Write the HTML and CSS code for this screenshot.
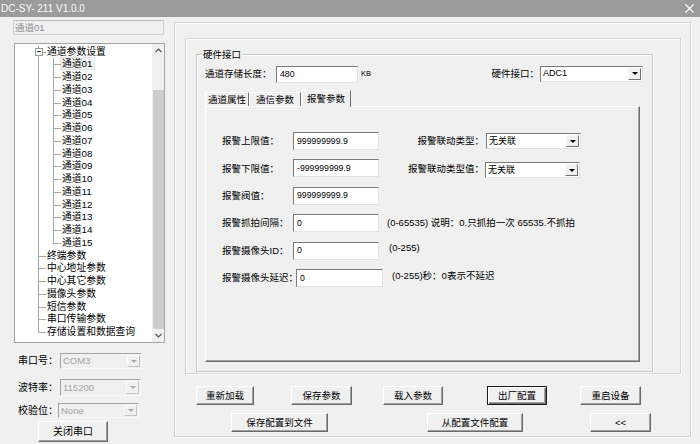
FILE: index.html
```html
<!DOCTYPE html>
<html lang="zh-CN">
<head>
<meta charset="utf-8">
<title>DC-SY- 211 V1.0.0</title>
<link rel="stylesheet" href="styles.css">
</head>
<body>
<div class="window">
  <div class="titlebar">
    <span class="title">DC-SY- 211 V1.0.0</span>
    <svg class="close" width="9" height="9" viewBox="0 0 9 9"><path d="M0.5 0.5 L8.5 8.5 M8.5 0.5 L0.5 8.5" stroke="#fff" stroke-width="1.1" fill="none"/></svg>
  </div>
  <div class="content">
    <div class="left">
      <div class="chan">通道01</div>
      <div class="tree">
        <div class="tree-body">
          <ul class="l1">
            <li class="open"><span class="box"></span><span class="t">通道参数设置</span>
              <ul class="l2">
                <li><span class="t"><span class="sel">通道01</span></span></li>
                <li><span class="t">通道02</span></li>
                <li><span class="t">通道03</span></li>
                <li><span class="t">通道04</span></li>
                <li><span class="t">通道05</span></li>
                <li><span class="t">通道06</span></li>
                <li><span class="t">通道07</span></li>
                <li><span class="t">通道08</span></li>
                <li><span class="t">通道09</span></li>
                <li><span class="t">通道10</span></li>
                <li><span class="t">通道11</span></li>
                <li><span class="t">通道12</span></li>
                <li><span class="t">通道13</span></li>
                <li><span class="t">通道14</span></li>
                <li><span class="t">通道15</span></li>
              </ul>
            </li>
            <li><span class="t">终端参数</span></li>
            <li><span class="t">中心地址参数</span></li>
            <li><span class="t">中心其它参数</span></li>
            <li><span class="t">摄像头参数</span></li>
            <li><span class="t">短信参数</span></li>
            <li><span class="t">串口传输参数</span></li>
            <li><span class="t">存储设置和数据查询</span></li>
          </ul>
        </div>
        <div class="vscroll">
          <div class="sb-btn"><svg width="7" height="5" viewBox="0 0 7 5"><path d="M0.5 4 L3.5 1 L6.5 4" stroke="#555" stroke-width="1.2" fill="none"/></svg></div>
          <div class="sb-track"><div class="sb-thumb"></div></div>
          <div class="sb-btn"><svg width="7" height="5" viewBox="0 0 7 5"><path d="M0.5 1 L3.5 4 L6.5 1" stroke="#555" stroke-width="1.2" fill="none"/></svg></div>
        </div>
      </div>
      <div class="serial">
        <div class="srow s1"><span class="slabel">串口号：</span><div class="combo disabled w82"><span class="val">COM3</span><span class="dd"></span></div></div>
        <div class="srow s2"><span class="slabel">波特率：</span><div class="combo disabled w81"><span class="val">115200</span><span class="dd"></span></div></div>
        <div class="srow s3"><span class="slabel">校验位：</span><div class="combo disabled w81"><span class="val">None</span><span class="dd"></span></div></div>
        <button class="btn close-port">关闭串口</button>
      </div>
    </div>

    <div class="frame-outer">
      <div class="frame-inner">
        <div class="group">
          <span class="legend">硬件接口</span>
          <div class="hw-row">
            <span class="hw-label">通道存储长度：</span>
            <div class="edit hw-len">480</div>
            <span class="kb">KB</span>
            <span class="hw-label2">硬件接口：</span>
            <div class="combo hw-sel"><span class="val">ADC1</span><span class="dd"></span></div>
          </div>
          <div class="tabs">
            <div class="tab t1">通道属性</div>
            <div class="tab t2">通信参数</div>
            <div class="tab t3 active">报警参数</div>
          </div>
          <div class="tabpanel">
            <div class="frow">
              <span class="flabel">报警上限值：</span>
              <div class="edit fin">999999999.9</div>
              <span class="rlabel">报警联动类型：</span>
              <div class="combo rsel"><span class="val">无关联</span><span class="dd"></span></div>
            </div>
            <div class="frow">
              <span class="flabel">报警下限值：</span>
              <div class="edit fin">-999999999.9</div>
              <span class="rlabel">报警联动类型值：</span>
              <div class="combo rsel rsel2"><span class="val">无关联</span><span class="dd"></span></div>
            </div>
            <div class="frow">
              <span class="flabel">报警阀值：</span>
              <div class="edit fin">999999999.9</div>
            </div>
            <div class="frow">
              <span class="flabel">报警抓拍间隔：</span>
              <div class="edit fin">0</div>
              <span class="note n4">(0-65535) 说明：0.只抓拍一次 65535.不抓拍</span>
            </div>
            <div class="frow">
              <span class="flabel">报警摄像头ID：</span>
              <div class="edit fin">0</div>
              <span class="note n5">(0-255)</span>
            </div>
            <div class="frow r6">
              <span class="flabel">报警摄像头延迟：</span>
              <div class="edit fin">0</div>
              <span class="note n6">(0-255)秒：0表示不延迟</span>
            </div>
          </div>
        </div>
      </div>
      <div class="btnrow row1">
        <button class="btn b1">重新加载</button>
        <button class="btn b2">保存参数</button>
        <button class="btn b3">载入参数</button>
        <button class="btn b4 default">出厂配置</button>
        <button class="btn b5">重启设备</button>
      </div>
      <div class="btnrow row2">
        <button class="btn c1">保存配置到文件</button>
        <button class="btn c2">从配置文件配置</button>
        <button class="btn c3">&lt;&lt;</button>
      </div>
    </div>
  </div>
</div>
</body>
</html>
```

FILE: styles.css
```css
* { box-sizing: border-box; }

html, body {
  margin: 0;
  padding: 0;
}

body {
  width: 700px;
  height: 444px;
  overflow: hidden;
  background: #f0f0f0;
  font-family: "Liberation Sans", "Noto Sans CJK SC", sans-serif;
  font-size: 9.5px;
  color: #000;
  line-height: 1;
}

.window {
  display: flex;
  flex-direction: column;
  width: 700px;
  height: 444px;
}

/* buttons (base) */
.btn {
  height: 19px;
  padding: 0;
  margin: 0;
  font: inherit;
  color: #000;
  background: #f0f0f0;
  border: 1px solid;
  border-color: #fff #6a6a6a #6a6a6a #fff;
  box-shadow: inset -1px -1px 0 #a0a0a0;
  white-space: nowrap;
  line-height: 1;
}

.btn.default {
  border-color: #1a1a1a;
  box-shadow: inset 1px 1px 0 #fff, inset -1px -1px 0 #6a6a6a, inset -2px -2px 0 #a0a0a0;
}

/* title bar */
.titlebar {
  height: 17px;
  flex: none;
  background: #9b9b9b;
  display: flex;
  align-items: center;
  justify-content: space-between;
  padding: 0 6px 0 1px;
  color: #fbfbfb;
}

.title {
  font-family: "Liberation Sans", sans-serif;
  font-size: 10px;
}

.close { display: block; margin-top: -1px; }

.content {
  display: flex;
  height: 427px;
}

/* left column */
.left {
  width: 174px;
  flex: none;
  padding: 3px 0 0 13px;
}

.chan {
  width: 151px;
  height: 15px;
  border: 1px solid #cfcfcf;
  border-top-color: #bdbdbd;
  background: #f0f0f0;
  color: #8c8c8c;
  padding-left: 1px;
  line-height: 13px;
}

.tree {
  margin: 8px 0 0 1px;
  width: 151px;
  height: 300px;
  border: 1px solid #a3a3a3;
  background: #fff;
  display: flex;
}

.tree-body {
  flex: 1;
  position: relative;
  overflow: hidden;
  padding-top: 1.6px;
  font-size: 9.8px;
}

.tree ul {
  list-style: none;
  margin: 0;
  padding: 0;
}

.l1, .l2, .open { position: relative; }

.l1::before {
  content: "";
  position: absolute;
  left: 23px;
  top: 0;
  bottom: 6.4px;
  border-left: 1px solid #a8a8a8;
}

.l2::before {
  content: "";
  position: absolute;
  left: 38px;
  top: 0;
  bottom: 6.4px;
  border-left: 1px solid #a8a8a8;
}

.t {
  display: block;
  position: relative;
  height: 12.75px;
  line-height: 12.75px;
  white-space: nowrap;
  padding-left: 32px;
}

.l1 > li > .t::before {
  content: "";
  position: absolute;
  left: 23px;
  width: 8px;
  top: 6px;
  border-top: 1px solid #a8a8a8;
}

.l2 .t { padding-left: 47px; }

.l2 > li > .t::before {
  content: "";
  position: absolute;
  left: 38px;
  width: 8px;
  top: 6px;
  border-top: 1px solid #a8a8a8;
}

.sel {
  background: #f2f2f2;
  outline: 1px solid #e4e4e4;
  padding: 0 1px;
  margin-left: -1px;
}

.box {
  position: absolute;
  left: 20px;
  top: 2.4px;
  width: 8px;
  height: 8px;
  border: 1px solid #9a9a9a;
  background: #fff;
  z-index: 1;
}

.box::after {
  content: "";
  position: absolute;
  left: 1px;
  right: 1px;
  top: 2.5px;
  border-top: 1px solid #333;
}

.vscroll {
  width: 12px;
  flex: none;
  background: #f0f0f0;
  display: flex;
  flex-direction: column;
}

.sb-btn {
  height: 13px;
  display: flex;
  align-items: center;
  justify-content: center;
}

.sb-btn svg { display: block; }

.sb-track {
  flex: 1;
  display: flex;
  flex-direction: column;
  padding: 33px 0 0 1px;
}

.sb-thumb {
  flex: 1;
  background: #cdcdcd;
}

/* serial settings */
.serial { margin-top: 10px; }

.srow {
  display: flex;
  align-items: center;
  padding-left: 5px;
}

.slabel { width: 42px; white-space: nowrap; font-size: 10px; }

.s1 { height: 16px; }
.s2 { height: 17px; margin-top: 10px; }
.s3 { height: 15px; margin-top: 7px; }
.s3 .slabel { width: 40px; }

.s1 .combo { height: 16px; }
.s2 .combo { height: 17px; }
.s3 .combo { height: 15px; }

.w82 { width: 82px; }
.w81 { width: 81px; }

.btn.close-port {
  display: block;
  margin: 3px 0 0 25px;
  width: 70px;
  height: 21px;
  font-size: 10px;
}

/* combos and edits */
.edit {
  display: flex;
  align-items: center;
  background: #fff;
  border: 1px solid;
  border-color: #7a7a7a #e3e3e3 #e3e3e3 #7a7a7a;
  padding-left: 3px;
  font-size: 8.7px;
  white-space: nowrap;
}

.combo {
  display: flex;
  align-items: center;
  background: #fff;
  border: 1px solid;
  border-color: #7a7a7a #e3e3e3 #e3e3e3 #7a7a7a;
  padding: 1px 1px 1px 2px;
  white-space: nowrap;
}

.combo .val { flex: 1; font-size: 9px; }

.dd {
  width: 13px;
  height: 100%;
  flex: none;
  background: #f0f0f0;
  border: 1px solid;
  border-color: #f8f8f8 #6f6f6f #6f6f6f #f8f8f8;
  display: flex;
  align-items: center;
  justify-content: center;
}

.dd::after {
  content: "";
  border-top: 3px solid #000;
  border-left: 3px solid transparent;
  border-right: 3px solid transparent;
}

.combo.disabled {
  background: #f0f0f0;
  border-color: #a5a5a5 #f8f8f8 #f8f8f8 #a5a5a5;
  color: #a3a3a3;
}

.combo.disabled .val { font-size: 9.5px; }

.combo.disabled .dd {
  border-color: #fafafa #c4c4c4 #c4c4c4 #fafafa;
}

.combo.disabled .dd::after { border-top-color: #a8a8a8; }

/* right frames */
.frame-outer {
  margin-top: 5px;
  width: 517px;
  height: 415px;
  flex: none;
  border: 1px solid #d2d2d2;
  box-shadow: inset 1px 1px 0 #fff, 1px 1px 0 #fff;
}

.frame-inner {
  margin: 15px 0 0 10px;
  width: 496px;
  height: 336px;
  border: 1px solid #d2d2d2;
  box-shadow: inset 1px 1px 0 #fff, 1px 1px 0 #fff;
}

.group {
  position: relative;
  margin: 15px 0 0 10px;
  width: 457px;
  height: 318px;
  border: 1px solid #c6c6c6;
  box-shadow: inset 1px 1px 0 #fff, 1px 1px 0 #fff;
  padding: 10px 9px 0 8px;
}

.legend {
  position: absolute;
  left: 5px;
  top: -6px;
  padding: 0 1px;
  background: #f0f0f0;
  line-height: 11px;
}

.hw-row {
  display: flex;
  align-items: center;
  height: 18px;
}

.hw-label { width: 71px; white-space: nowrap; }

.hw-len { width: 82px; height: 17px; }

.kb { margin-left: 3px; font-size: 7.5px; }

.hw-label2 { margin-left: auto; margin-right: 1px; }

.hw-sel { width: 103px; height: 16px; margin-top: -1px; }

/* tabs */
.tabs {
  position: relative;
  z-index: 1;
  display: flex;
  align-items: flex-end;
  height: 16px;
  margin-top: 7px;
}

.tab {
  height: 14px;
  border: 1px solid;
  border-bottom: none;
  border-color: #fff #6f6f6f transparent #fff;
  display: flex;
  align-items: center;
  justify-content: center;
  padding-top: 1px;
  white-space: nowrap;
}

.t1 { width: 44px; }
.t2 { width: 52px; }

.tab.active {
  width: 50px;
  height: 17px;
  margin-bottom: -1px;
  background: #f0f0f0;
  padding-bottom: 2px;
}

.tabpanel {
  width: 435px;
  height: 256px;
  border: 1px solid;
  border-color: #fff #6f6f6f #6f6f6f #fff;
  box-shadow: inset -1px -1px 0 #a0a0a0;
  padding: 25px 0 0 16px;
}

.frow {
  display: flex;
  align-items: center;
  height: 18px;
  margin-bottom: 9.4px;
}

.flabel { width: 71px; white-space: nowrap; }
.r6 .flabel { width: 74px; }

.fin { width: 86px; height: 18px; }
.r6 .fin { width: 87px; }

.rlabel {
  width: 106px;
  display: flex;
  justify-content: flex-end;
  white-space: nowrap;
  padding-right: 1px;
}

.rsel { width: 95px; height: 16px; margin-left: 1px; }
.rsel2 { margin-left: 0; margin-top: 4px; }

.note { white-space: nowrap; margin-bottom: 3px; }
.n4 { margin-left: 8px; margin-bottom: 1px; }
.n5 { margin-left: 10px; margin-bottom: 5px; }
.n6 { margin-left: 9px; margin-bottom: 5px; }

/* button rows */
.btnrow {
  display: flex;
  height: 19px;
}

.row1 { margin-top: 12px; }
.row2 { margin-top: 8px; }

.b1 { width: 58px; margin-left: 21px; }
.b2 { width: 61px; margin-left: 37px; }
.b3 { width: 60px; margin-left: 31px; }
.b4 { width: 60px; margin-left: 44px; }
.b5 { width: 61px; margin-left: 33px; }

.c1 { width: 97px; margin-left: 56px; }
.c2 { width: 96px; margin-left: 99px; }
.c3 { width: 61px; margin-left: 67px; }
```
